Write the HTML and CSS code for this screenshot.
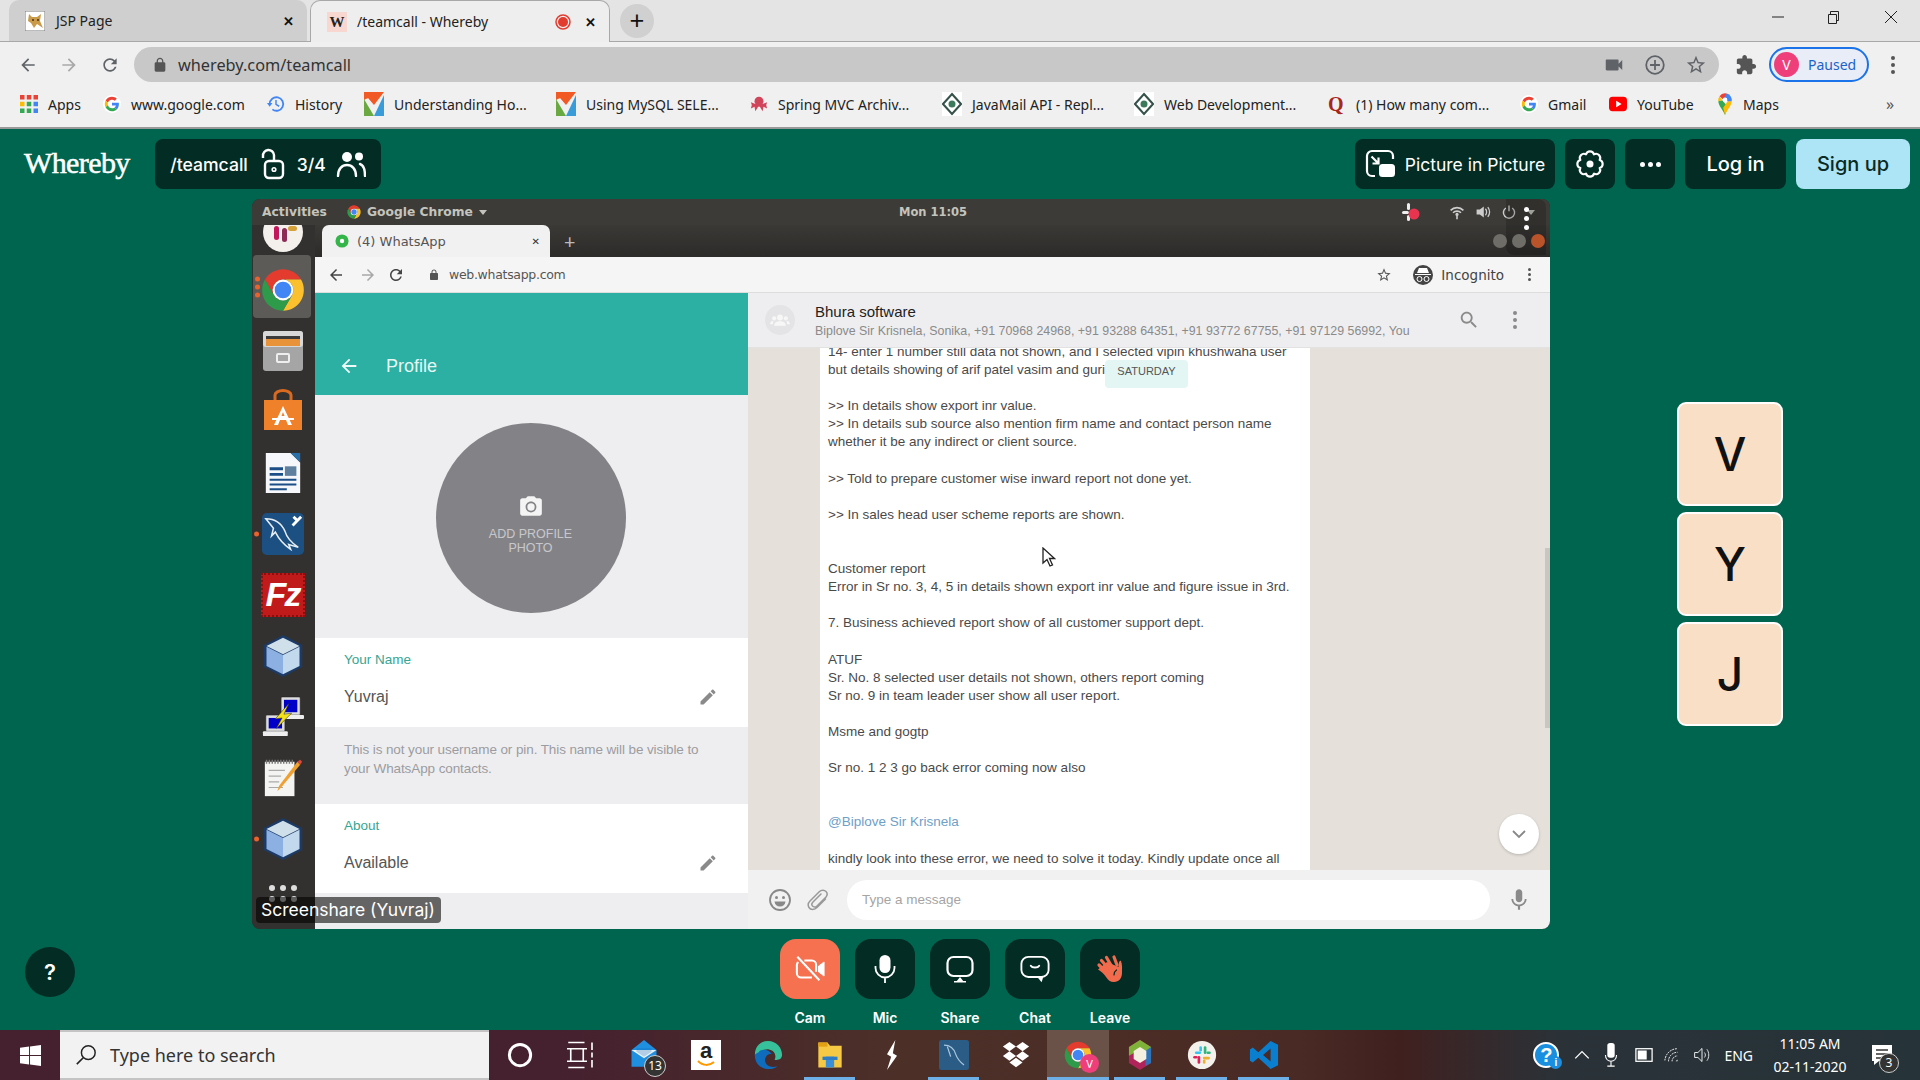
FILE: index.html
```html
<!DOCTYPE html>
<html lang="en">
<head>
  <meta charset="UTF-8" />
  <title>/teamcall - Whereby</title>
  <link rel="stylesheet" href="styles.css">
</head>
<body>
<svg class="defs" width="0" height="0">
  <symbol id="chrome" viewBox="0 0 48 48">
    <path fill="#e33b2e" d="M41.32 14A20 20 0 0 0 6.68 14L15.34 29A10 10 0 0 1 24 14Z"/>
    <path fill="#fbc02d" d="M41.32 14A20 20 0 0 1 24 44L32.66 29A10 10 0 0 0 24 14Z"/>
    <path fill="#2e9b4a" d="M24 44A20 20 0 0 1 6.68 14L15.34 29A10 10 0 0 0 32.66 29Z"/>
    <circle cx="24" cy="24" r="10" fill="#fff"/>
    <circle cx="24" cy="24" r="8" fill="#4285f4"/>
  </symbol>
  <symbol id="google" viewBox="-6 -6 60 60">
    <circle cx="24" cy="24" r="30" fill="#fff"/>
    <path fill="#ea4335" d="M24 9.5c3.54 0 6.71 1.22 9.21 3.6l6.85-6.85C35.9 2.38 30.47 0 24 0 14.62 0 6.51 5.38 2.56 13.22l7.98 6.19C12.43 13.72 17.74 9.5 24 9.5z"/>
    <path fill="#4285f4" d="M46.98 24.55c0-1.57-.15-3.09-.38-4.55H24v9.02h12.94c-.58 2.96-2.26 5.48-4.78 7.18l7.73 6c4.51-4.18 7.09-10.36 7.09-17.65z"/>
    <path fill="#fbbc05" d="M10.53 28.59c-.48-1.45-.76-2.99-.76-4.59s.27-3.14.76-4.59l-7.98-6.19C.92 16.46 0 20.12 0 24c0 3.88.92 7.54 2.56 10.78l7.97-6.19z"/>
    <path fill="#34a853" d="M24 48c6.48 0 11.93-2.13 15.89-5.81l-7.73-6c-2.15 1.45-4.92 2.3-8.16 2.3-6.26 0-11.57-4.22-13.47-9.91l-7.98 6.19C6.51 42.62 14.62 48 24 48z"/>
  </symbol>
  <symbol id="vlogo" viewBox="0 0 20 24">
    <path fill="#f15a24" d="M0 0H20L10 13 4 6 0 8Z"/>
    <path fill="#6aa842" d="M0 7 10 24H0Z"/>
    <path fill="#3a9bd9" d="M20 3V24H10Z"/>
  </symbol>
  <symbol id="diamond" viewBox="0 0 20 24">
    <rect width="20" height="24" fill="#fff"/>
    <path fill="none" stroke="#35524a" stroke-width="2" d="M10 2 19 12 10 22 1 12Z"/>
    <circle cx="10" cy="12" r="3.5" fill="#3d7a5c"/>
  </symbol>
  <symbol id="cube" viewBox="0 0 48 48">
    <path fill="#1c3a66" d="M24 1 45 12V36L24 47 3 36V12Z"/>
    <path fill="#cfe0ea" d="M24 4 42 13 24 22 6 13Z"/>
    <path fill="#8db0e2" d="M6 14 24 23V44L6 35Z"/>
    <path fill="#c2d8ec" d="M42 14 24 23V44L42 35Z"/>
  </symbol>
  <symbol id="back" viewBox="0 0 24 24"><path d="M20 11H7.83l5.59-5.59L12 4l-8 8 8 8 1.41-1.41L7.83 13H20v-2z"/></symbol>
  <symbol id="reload" viewBox="0 0 24 24"><path d="M17.65 6.35C16.2 4.9 14.21 4 12 4c-4.42 0-7.99 3.58-7.99 8s3.57 8 7.99 8c3.73 0 6.84-2.55 7.73-6h-2.08c-.82 2.33-3.04 4-5.65 4-3.31 0-6-2.69-6-6s2.69-6 6-6c1.66 0 3.14.69 4.22 1.78L13 11h7V4l-2.35 2.35z"/></symbol>
  <symbol id="lock" viewBox="0 0 24 24"><path d="M18 8h-1V6c0-2.76-2.24-5-5-5S7 3.24 7 6v2H6c-1.1 0-2 .9-2 2v10c0 1.1.9 2 2 2h12c1.1 0 2-.9 2-2V10c0-1.1-.9-2-2-2zm-2.9 0H8.9V6c0-1.71 1.39-3.1 3.1-3.1 1.71 0 3.1 1.39 3.1 3.1v2z"/></symbol>
  <symbol id="star" viewBox="0 0 24 24"><path d="M22 9.24l-7.19-.62L12 2 9.19 8.63 2 9.24l5.46 4.73L5.82 21 12 17.27 18.18 21l-1.63-7.03L22 9.24zM12 15.4l-3.76 2.27 1-4.28-3.32-2.88 4.38-.38L12 6.1l1.71 4.04 4.38.38-3.32 2.88 1 4.28L12 15.4z"/></symbol>
  <symbol id="pencil" viewBox="0 0 24 24"><path d="M3 17.25V21h3.75L17.81 9.94l-3.75-3.75L3 17.25zM20.71 7.04c.39-.39.39-1.02 0-1.41l-2.34-2.34c-.39-.39-1.02-.39-1.41 0l-1.83 1.83 3.75 3.75 1.83-1.83z"/></symbol>
  <symbol id="mic" viewBox="0 0 24 24"><path d="M12 14c1.66 0 3-1.34 3-3V5c0-1.66-1.34-3-3-3S9 3.34 9 5v6c0 1.66 1.34 3 3 3zm5.3-3c0 3-2.54 5.1-5.3 5.1S6.7 14 6.7 11H5c0 3.41 2.72 6.23 6 6.72V21h2v-3.28c3.28-.48 6-3.3 6-6.72h-1.7z"/></symbol>
</svg>

<!-- browser chrome -->
<div class="tabstrip">
  <div class="tab">
    <svg class="favicon" viewBox="0 0 20 20"><rect width="20" height="20" fill="#fff" stroke="#777"/><path fill="#c99a4a" d="M4 3 7 6H12L16 3 15 10 18 17 12 13 9 17 6 12 3 10Z"/><path fill="#6b4a20" d="M7 8h2v2H7zM12 8h2v2h-2z"/></svg>
    <span class="tab-title">JSP Page</span>
    <span class="tab-close">✕</span>
  </div>
  <div class="tab tab-active">
    <span class="w-favicon">W</span>
    <span class="tab-title">/teamcall - Whereby</span>
    <svg class="rec-dot" viewBox="0 0 16 16"><circle cx="8" cy="8" r="7" fill="none" stroke="#e33b2e" stroke-width="1.5"/><circle cx="8" cy="8" r="5" fill="#e33b2e"/></svg>
    <span class="tab-close">✕</span>
  </div>
  <div class="new-tab">+</div>
  <div class="win-controls">
    <svg viewBox="0 0 14 14"><path d="M1 7H13" stroke="#222" fill="none"/></svg>
    <svg viewBox="0 0 14 14"><path d="M2.5 4.5H10.5V13.5H2.5ZM4.5 4.5V1.5H12.5V10.5H10.5" stroke="#222" fill="none"/></svg>
    <svg class="win-close" viewBox="0 0 14 14"><path d="M1 1 13 13M13 1 1 13" stroke="#222" fill="none"/></svg>
  </div>
</div>

<div class="toolbar">
  <svg class="tool-icon"><use href="#back"/></svg>
  <svg class="tool-icon faded"><use href="#back" transform="matrix(-1 0 0 1 20 0)"/></svg>
  <svg class="tool-icon"><use href="#reload"/></svg>
  <div class="omnibox">
    <svg class="omni-lock"><use href="#lock"/></svg>
    <span class="omni-url">whereby.com/teamcall</span>
    <svg class="omni-icon" viewBox="0 0 24 24"><path d="M17 10.5V7c0-.55-.45-1-1-1H4c-.55 0-1 .45-1 1v10c0 .55.45 1 1 1h12c.55 0 1-.45 1-1v-3.5l4 4v-11l-4 4z"/></svg>
    <svg class="omni-icon" viewBox="0 0 20 20"><circle cx="10" cy="10" r="8" fill="none" stroke="#5f6368" stroke-width="1.6"/><path d="M10 5.5V14.5M5.5 10H14.5" stroke="#5f6368" stroke-width="1.6"/></svg>
    <svg class="omni-icon"><use href="#star"/></svg>
  </div>
  <svg class="puzzle" viewBox="0 0 24 24"><path d="M20.5 11H19V7c0-1.1-.9-2-2-2h-4V3.5C13 2.12 11.88 1 10.5 1S8 2.12 8 3.5V5H4c-1.1 0-1.99.9-1.99 2v3.8H3.5c1.49 0 2.7 1.21 2.7 2.7s-1.21 2.7-2.7 2.7H2V20c0 1.1.9 2 2 2h3.8v-1.5c0-1.49 1.21-2.7 2.7-2.7 1.49 0 2.7 1.21 2.7 2.7V22H17c1.1 0 2-.9 2-2v-4h1.5c1.38 0 2.5-1.12 2.5-2.5S21.88 11 20.5 11z"/></svg>
  <div class="profile-chip"><span class="avatar">V</span><span>Paused</span></div>
  <div class="kebab"><i></i><i></i><i></i></div>
</div>

<div class="bookmarks">
  <div class="bm"><svg class="bm-icon" viewBox="0 0 16 16"><g fill="#ea4335"><rect width="4" height="4"/><rect x="6" width="4" height="4"/><rect x="12" width="4" height="4"/></g><g fill="#fbbc05"><rect y="6" width="4" height="4"/></g><g fill="#34a853"><rect x="6" y="6" width="4" height="4"/><rect y="12" width="4" height="4"/><rect x="6" y="12" width="4" height="4"/></g><g fill="#4285f4"><rect x="12" y="6" width="4" height="4"/><rect x="12" y="12" width="4" height="4"/></g></svg>Apps</div>
  <div class="bm"><svg class="bm-icon"><use href="#google"/></svg>www.google.com</div>
  <div class="bm"><svg class="bm-icon" viewBox="0 0 20 20"><path d="M3 10A7.5 7.5 0 1 1 6 16" fill="none" stroke="#4285f4" stroke-width="2"/><path d="M0 9H6L3 13Z" fill="#4285f4"/><path d="M10 5.5V10.5L13.5 12.5" fill="none" stroke="#4285f4" stroke-width="1.6"/></svg>History</div>
  <div class="bm"><svg class="bm-icon bm-tall"><use href="#vlogo"/></svg>Understanding Ho...</div>
  <div class="bm"><svg class="bm-icon bm-tall"><use href="#vlogo"/></svg>Using MySQL SELE...</div>
  <div class="bm"><svg class="bm-icon" viewBox="0 0 20 20"><g fill="#d0455a"><circle cx="10" cy="7" r="5"/><path d="M6 10 1 8 2 11 1 15 5 13 6 18 9 13H11L14 18 15 13 19 15 18 11 19 8 14 10Z"/></g></svg>Spring MVC Archiv...</div>
  <div class="bm"><svg class="bm-icon bm-tall"><use href="#diamond"/></svg>JavaMail API - Repl...</div>
  <div class="bm"><svg class="bm-icon bm-tall"><use href="#diamond"/></svg>Web Development...</div>
  <div class="bm"><span class="quora">Q</span>(1) How many com...</div>
  <div class="bm"><svg class="bm-icon"><use href="#google"/></svg>Gmail</div>
  <div class="bm"><svg class="bm-icon" viewBox="0 0 20 20"><rect y="2" width="20" height="16" rx="4" fill="#f00"/><path d="M8 6.5 14 10 8 13.5Z" fill="#fff"/></svg>YouTube</div>
  <div class="bm"><svg class="bm-icon bm-pin" viewBox="0 0 16 24"><path fill="#34a853" d="M8 24C6 19 1 14 .7 9L5 8 11 15Z"/><path fill="#fbbc05" d="M8 24C10 19 15 14 15.3 9L11 9 6 16Z"/><path fill="#4285f4" d="M15.3 9A7.5 7.5 0 0 0 10 .5L6 5 11 9Z"/><path fill="#ea4335" d="M10 .5A7.5 7.5 0 0 0 2 3.5L6 7Z"/><path fill="#fbbc05" d="M2 3.5A7.5 7.5 0 0 0 .7 9L5 8Z"/><circle cx="8" cy="7.5" r="2.6" fill="#fff"/></svg>Maps</div>
  <div class="bm-more">»</div>
</div>

<!-- whereby room -->
<div class="room">
  <header class="room-top">
    <div class="logo">Whereby</div>
    <div class="pill room-pill">
      <span>/teamcall</span>
      <svg class="lock-open" viewBox="0 0 26 32"><path d="M4 10V8A5.5 5.5 0 0 1 15 7V12" fill="none" stroke="#fff" stroke-width="2.4"/><rect x="6" y="13" width="18" height="17" rx="4" fill="none" stroke="#fff" stroke-width="2.4"/><circle cx="15" cy="21.5" r="1.8" fill="none" stroke="#fff" stroke-width="1.6"/></svg>
      <span>3/4</span>
      <svg class="people" viewBox="0 0 30 26"><circle cx="11" cy="6" r="5" fill="#fff"/><circle cx="23" cy="5.5" r="4" fill="#fff"/><path d="M2 25C2 18 6 14 11 14S20 18 20 25M24 13C27 14 29 19 29 25" fill="none" stroke="#fff" stroke-width="2.4" stroke-linecap="round"/></svg>
    </div>
    <div class="pill pip-pill">
      <svg class="pip-icon" viewBox="0 0 30 30"><path d="M10 27H7A5 5 0 0 1 2 22V7A5 5 0 0 1 7 2H23A5 5 0 0 1 28 7V10" fill="none" stroke="#fff" stroke-width="2.2"/><path d="M6.500 7.500 13 14M13.500 8.500V14.500H7.500" fill="none" stroke="#fff" stroke-width="2.2"/><rect x="14" y="15" width="16" height="13" rx="3.500" fill="#fff"/></svg>
      <span>Picture in Picture</span>
    </div>
    <div class="pill icon-pill">
      <svg class="gear" viewBox="0 0 30 30"><path d="M18.750 5.950A3.900 3.900 0 0 1 24.050 11.250A3.900 3.900 0 0 1 24.050 18.750A3.900 3.900 0 0 1 18.750 24.050A3.900 3.900 0 0 1 11.250 24.050A3.900 3.900 0 0 1 5.950 18.750A3.900 3.900 0 0 1 5.950 11.250A3.900 3.900 0 0 1 11.250 5.950A3.900 3.900 0 0 1 18.750 5.950Z" fill="none" stroke="#fff" stroke-width="2" stroke-linejoin="round"/><circle cx="15" cy="15" r="3.300" fill="#fff"/></svg>
    </div>
    <div class="pill icon-pill"><span class="more-dots"><i></i><i></i><i></i></span></div>
    <div class="pill login">Log in</div>
    <div class="pill signup">Sign up</div>
  </header>

  <main class="room-mid">
    <section class="stage">
      <div class="ubuntu-bar">
        <span class="activities">Activities</span>
        <svg class="ubuntu-chrome"><use href="#chrome"/></svg>
        <span class="ubuntu-app">Google Chrome</span>
        <span class="caret"></span>
        <span class="clock">Mon 11:05</span>
        <div class="ubuntu-tray">
          <svg viewBox="0 0 20 20" class="tray-slack"><g fill="#eee"><rect x="6" y="1" width="3" height="7" rx="1.5"/><rect x="1" y="9" width="7" height="3" rx="1.5"/><rect x="6" y="13" width="3" height="6" rx="1.5"/></g><circle cx="13" cy="12" r="5.5" fill="#e8344e"/></svg>
          <svg viewBox="0 0 20 20"><path d="M2 8A11 11 0 0 1 18 8M5 11A7 7 0 0 1 15 11" fill="none" stroke="#ccc" stroke-width="2"/><circle cx="10" cy="13" r="2" fill="#ccc"/><path d="M10 14V19" stroke="#ccc" stroke-width="2"/></svg>
          <svg viewBox="0 0 20 20"><path d="M2 7H6L11 3V17L6 13H2Z" fill="#ccc"/><path d="M13 6C15 8 15 12 13 14M16 4C19 8 19 12 16 16" fill="none" stroke="#ccc" stroke-width="1.6"/></svg>
          <svg viewBox="0 0 20 20"><path d="M6 5A7 7 0 1 0 14 5M10 2V9" fill="none" stroke="#ccc" stroke-width="1.8"/></svg>
          <span class="caret"></span>
        </div>
      </div>

      <div class="desk">
        <aside class="dock">
          <div class="dock-slack"><svg viewBox="0 0 40 40"><circle cx="20" cy="20" r="20" fill="#f4f1ec"/><rect x="11" y="14" width="5" height="14" rx="2.5" fill="#c2185b"/><rect x="19" y="16" width="5" height="14" rx="2.5" fill="#8e2a55"/><rect x="25" y="14" width="9" height="5" rx="2.5" fill="#d4a13a"/></svg></div>
          <div class="dock-item dock-active"><span class="run-dots"><i></i><i></i><i></i></span><svg class="dock-chrome"><use href="#chrome"/></svg></div>
          <div class="dock-item">
            <svg viewBox="0 0 40 42"><rect y="1" width="40" height="40" rx="3" fill="#a5a5a5"/><rect y="1" width="40" height="16" rx="3" fill="#d8d8d8"/><rect x="3" y="8" width="34" height="8" fill="#e8923a"/><rect x="3" y="6" width="34" height="3" fill="#3b3b3b"/><rect x="14" y="24" width="12" height="8" rx="1" fill="none" stroke="#eee" stroke-width="2"/></svg>
          </div>
          <div class="dock-item dock-store">
            <svg viewBox="0 0 40 42"><path d="M1 11H39V41H1Z" fill="#f0812b"/><path d="M12 11V6A8 4.5 0 0 1 28 6V11" fill="none" stroke="#d96a1f" stroke-width="3"/><path d="M20 17 11 36H15L17 31H23L25 36H29ZM18.500 27 20 23 21.500 27Z" fill="#fff"/><rect x="9" y="29" width="22" height="2" fill="#fff"/></svg>
          </div>
          <div class="dock-item">
            <svg viewBox="0 0 40 44"><path d="M2 1H28L38 11V43H2Z" fill="#f5f7fa"/><path d="M28 1 38 11V1Z" fill="#2a6fa8"/><path d="M6 16H20V19H6ZM6 22H20V25H6ZM6 28H34V30H6ZM6 33H34V35H6ZM6 38H24V40H6Z" fill="#1b4e87"/><rect x="22" y="15" width="12" height="10" fill="#5f7f9f"/></svg>
          </div>
          <div class="dock-item">
            <span class="run-dots"><i></i></span>
            <svg viewBox="0 0 44 44"><rect width="44" height="44" rx="5" fill="#1c4f82"/><path d="M4 6C12 6 20 10 24 19C26 26 32 32 38 36L28 33 30 38C24 34 18 28 14 20L10 24 12 16Z" fill="none" stroke="#e6edf3" stroke-width="1.600"/><path d="M33 4 38 9M41 4 32 13" stroke="#fff" stroke-width="3"/></svg>
          </div>
          <div class="dock-item">
            <div class="fz">Fz</div>
          </div>
          <div class="dock-item"><svg class="dock-cube"><use href="#cube"/></svg></div>
          <div class="dock-item">
            <svg viewBox="0 0 44 44"><rect x="20" y="1" width="20" height="19" rx="1" fill="#ddd" stroke="#222" stroke-width=".6"/><rect x="23" y="4" width="14" height="13" fill="#0000c8"/><rect x="24" y="20" width="20" height="4" rx="1" fill="#eee"/><rect x="4" y="20" width="20" height="17" rx="1" fill="#ddd" stroke="#222" stroke-width=".6"/><rect x="7" y="23" width="14" height="11" fill="#0000c8"/><rect x="1" y="37" width="26" height="5" rx="1" fill="#eee"/><path d="M28 8 14 24 21 23 15 34 31 18 23 19Z" fill="#f4e11a" stroke="#333" stroke-width=".6"/></svg>
          </div>
          <div class="dock-item">
            <svg viewBox="0 0 44 44"><rect x="3" y="5" width="31" height="36" fill="#f4f4f2"/><path d="M4 5H33" stroke="#777" stroke-width="4" stroke-dasharray="1.500 1.500"/><path d="M7 14H24M7 20H20M7 26H18M7 32H22" stroke="#aaa" stroke-width="1.200"/><path d="M40 8 20 32 16 36 18 30 37 5Z" fill="#f0a030"/><path d="M37 5 40 8 42 5 40 3Z" fill="#e0483c"/></svg>
          </div>
          <div class="dock-item"><span class="run-dots"><i></i></span><svg class="dock-cube"><use href="#cube"/></svg></div>
          <div class="dock-grid"><i></i><i></i><i></i><i></i><i></i><i></i></div>
        </aside>

        <div class="ubuntu-win">
          <div class="inner-tabs">
            <div class="inner-tab">
              <svg viewBox="0 0 16 16"><circle cx="8" cy="8" r="7.500" fill="#33b54a"/><circle cx="8" cy="8" r="2.500" fill="#fff"/></svg>
              <span>(4) WhatsApp</span>
              <span class="inner-close">✕</span>
            </div>
            <span class="inner-new">+</span>
          </div>
          <div class="inner-toolbar">
            <svg class="inner-icon"><use href="#back"/></svg>
            <svg class="inner-icon faded"><use href="#back" transform="matrix(-1 0 0 1 20 0)"/></svg>
            <svg class="inner-icon"><use href="#reload"/></svg>
            <svg class="inner-lock"><use href="#lock"/></svg>
            <span class="inner-url">web.whatsapp.com</span>
            <svg class="inner-star"><use href="#star"/></svg>
            <span class="incog-icon"><svg viewBox="0 0 20 20"><path d="M4 8 6 3H14L16 8ZM2 9H18V10H2Z" fill="#fff"/><circle cx="6.500" cy="14" r="2.500" fill="none" stroke="#fff"/><circle cx="13.500" cy="14" r="2.500" fill="none" stroke="#fff"/></svg></span>
            <span class="incog-label">Incognito</span>
            <span class="kebab kebab-small"><i></i><i></i><i></i></span>
          </div>

          <div class="wa">
            <div class="wa-left">
              <div class="wa-head">
                <svg class="wa-back"><use href="#back"/></svg>
                <span>Profile</span>
              </div>
              <div class="wa-photo">
                <div class="photo-circle">
                  <svg viewBox="0 0 24 24"><path d="M9 2L7.170 4H4c-1.100 0-2 .9-2 2v12c0 1.100.9 2 2 2h16c1.100 0 2-.9 2-2V6c0-1.100-.9-2-2-2h-3.170L15 2H9zm3 15c-2.760 0-5-2.240-5-5s2.240-5 5-5 5 2.240 5 5-2.240 5-5 5z"/><circle cx="12" cy="12" r="3.400"/></svg>
                  <span>ADD PROFILE<br>PHOTO</span>
                </div>
              </div>
              <div class="wa-field">
                <div class="field-label">Your Name</div>
                <div class="field-value"><span>Yuvraj</span><svg><use href="#pencil"/></svg></div>
              </div>
              <div class="wa-hint">This is not your username or pin. This name will be visible to your WhatsApp contacts.</div>
              <div class="wa-field">
                <div class="field-label">About</div>
                <div class="field-value"><span>Available</span><svg><use href="#pencil"/></svg></div>
              </div>
            </div>

            <div class="wa-right">
              <div class="chat-head">
                <span class="group-avatar"><svg viewBox="0 0 24 24"><circle cx="12" cy="9" r="3.500"/><circle cx="5" cy="10" r="2.500"/><circle cx="19" cy="10" r="2.500"/><path d="M5 19C5 15 8 13.500 12 13.500S19 15 19 19ZM0 17C0 14.500 2 13 4 13L3.500 17ZM24 17C24 14.500 22 13 20 13L20.500 17Z"/></svg></span>
                <div class="chat-meta">
                  <div class="chat-name">Bhura software</div>
                  <div class="chat-members">Biplove Sir Krisnela, Sonika, +91 70968 24968, +91 93288 64351, +91 93772 67755, +91 97129 56992, You</div>
                </div>
                <svg class="chat-search" viewBox="0 0 24 24"><path d="M15.500 14h-.79l-.28-.27C15.410 12.590 16 11.110 16 9.500 16 5.910 13.090 3 9.500 3S3 5.910 3 9.500 5.910 16 9.500 16c1.610 0 3.090-.59 4.230-1.570l.27.28v.79l5 4.990L20.490 19l-4.990-5zm-6 0C7.010 14 5 11.990 5 9.500S7.010 5 9.500 5 14 7.010 14 9.500 11.990 14 9.500 14z"/></svg>
                <span class="kebab kebab-chat"><i></i><i></i><i></i></span>
              </div>
              <div class="chat-area">
                <div class="bubble">
                  14- enter 1 number still data not shown, and I selected vipin khushwaha user<br>
                  but details showing of arif patel vasim and guri<br>
                  <br>
                  &gt;&gt; In details show export inr value.<br>
                  &gt;&gt; In details sub source also mention firm name and contact person name<br>
                  whether it be any indirect or client source.<br>
                  <br>
                  &gt;&gt; Told to prepare customer wise inward report not done yet.<br>
                  <br>
                  &gt;&gt; In sales head user scheme reports are shown.<br>
                  <br>
                  <br>
                  Customer report<br>
                  Error in Sr no. 3, 4, 5 in details shown export inr value and figure issue in 3rd.<br>
                  <br>
                  7. Business achieved report show of all customer support dept.<br>
                  <br>
                  ATUF<br>
                  Sr. No. 8 selected user details not shown, others report coming<br>
                  Sr no. 9 in team leader user show all user report.<br>
                  <br>
                  Msme and gogtp<br>
                  <br>
                  Sr no. 1 2 3 go back error coming now also<br>
                  <br>
                  <br>
                  <span class="mention">@Biplove Sir Krisnela</span><br>
                  <br>
                  kindly look into these error, we need to solve it today. Kindly update once all
                </div>
                <div class="date-chip">SATURDAY</div>
                <svg class="cursor" viewBox="0 0 14 20"><path d="M1 1V16L5 12.500 8 19 10.500 18 7.500 11.500H12.500Z" fill="#fff" stroke="#222" stroke-width="1.300"/></svg>
                <div class="scroll-down"><svg viewBox="0 0 16 16"><path d="M2 5 8 11 14 5" fill="none" stroke="#888" stroke-width="1.800"/></svg></div>
                <div class="scrollbar"></div>
              </div>
              <div class="chat-foot">
                <svg class="foot-icon" viewBox="0 0 24 24"><circle cx="12" cy="12" r="10" fill="none" stroke="#888" stroke-width="1.800"/><circle cx="8.500" cy="9.500" r="1.500" fill="#888"/><circle cx="15.500" cy="9.500" r="1.500" fill="#888"/><path d="M6.500 13.500H17.500C17 17 15 18.500 12 18.500S7 17 6.500 13.500Z" fill="#888"/></svg>
                <svg class="foot-icon" viewBox="0 0 24 24"><path d="M19.500 11 11 19.500C8.500 22 4.500 22 3 19.500S2.500 14.500 4 13L13.500 3.500C15.500 1.500 18.500 2 20 3.500S21.500 7 20 9L11 18C9.500 19.500 7.500 19 6.500 18S5.500 15.500 7 14L15 6" fill="none" stroke="#999" stroke-width="1.500" stroke-linecap="round"/></svg>
                <div class="msg-input">Type a message</div>
                <svg class="foot-mic"><use href="#mic"/></svg>
              </div>
            </div>
          </div>
        </div>
      </div>

      <div class="dock-menu"><i></i><i></i><i></i></div>
      <div class="win-dots"><i></i><i></i><i class="win-dot-close"></i></div>
      <div class="share-label">Screenshare (Yuvraj)</div>
    </section>

    <div class="tiles">
      <div class="tile">V</div>
      <div class="tile">Y</div>
      <div class="tile">J</div>
    </div>
  </main>

  <footer class="room-bottom">
    <div class="help">?</div>
    <div class="controls">
      <div class="control">
        <div class="control-btn cam-btn">
          <svg viewBox="0 0 32 28"><path d="M10 5H18A4.500 4.500 0 0 1 22.500 9.500V17M18 23H6.500A4.500 4.500 0 0 1 2 18.500V9.500A4.500 4.500 0 0 1 3.500 6.500" fill="none" stroke="#fff" stroke-width="2.200"/><path d="M25 11 31 6.500V21.500L25 17Z" fill="#fff" stroke="#fff" stroke-linejoin="round"/><path d="M2.500 1 26 26" stroke="#fff" stroke-width="2.200"/></svg>
        </div>
        <span>Cam</span>
      </div>
      <div class="control">
        <div class="control-btn"><svg viewBox="0 0 24 30"><rect x="6.500" y="1" width="11" height="18" rx="5.500" fill="#fff"/><path d="M2.500 12V14A9.500 9.500 0 0 0 21.500 14V12M12 23.500V29" fill="none" stroke="#fff" stroke-width="1.800"/></svg></div>
        <span>Mic</span>
      </div>
      <div class="control">
        <div class="control-btn"><svg viewBox="0 0 30 30"><rect x="2.500" y="3" width="25" height="19" rx="6" fill="none" stroke="#fff" stroke-width="2.200"/><path d="M15 23 19 28H11Z M9 27H21V28.500H9Z" fill="#fff"/></svg></div>
        <span>Share</span>
      </div>
      <div class="control">
        <div class="control-btn"><svg viewBox="0 0 32 32"><path d="M9 3H23A7.500 7.500 0 0 1 30.500 10.500V17A7.500 7.500 0 0 1 23 24.500H9A7.500 7.500 0 0 1 1.500 17V10.500A7.500 7.500 0 0 1 9 3Z" fill="none" stroke="#fff" stroke-width="2"/><path d="M18 24H25L23 30Z" fill="#fff"/><path d="M11.500 12.500C13 15 19 15 20.500 12.500" fill="none" stroke="#fff" stroke-width="2" stroke-linecap="round"/></svg></div>
        <span>Chat</span>
      </div>
      <div class="control">
        <div class="control-btn"><svg viewBox="0 0 30 30"><path d="M4 11 11 18M6.500 6.500 13 14M11.500 3.500 16.500 12M19 3 22 11" fill="none" stroke="#f26b4d" stroke-width="3.200" stroke-linecap="round"/><path d="M3 15.500C6 17 9 20 11 23C13 26 15 28 19 28C24 28 27 24 27 19C27 15 27.500 11 26 7C24.500 6 23.500 9 23.500 13L12 8Z" fill="#f26b4d"/><path d="M19 21C19 18.500 20 17 21.500 16" fill="none" stroke="#022c24" stroke-width="1.200" stroke-linecap="round"/></svg></div>
        <span>Leave</span>
      </div>
    </div>
  </footer>
</div>

<!-- windows taskbar -->
<div class="taskbar">
  <div class="start"><svg viewBox="0 0 22 22"><path fill="#fff" d="M0 3 9.500 1.700V10.500H0ZM10.500 1.500 22 0V10.500H10.500ZM0 11.500H9.500V20.300L0 19ZM10.500 11.500H22V22L10.500 20.500Z"/></svg></div>
  <div class="search">
    <svg viewBox="0 0 24 24"><circle cx="14.500" cy="9.500" r="7.500" fill="none" stroke="#222" stroke-width="1.600"/><path d="M9 15 2 22" stroke="#222" stroke-width="1.800"/></svg>
    <span>Type here to search</span>
  </div>
  <div class="task-icons">
    <div class="task"><svg viewBox="0 0 24 24"><circle cx="12" cy="12" r="8.500" fill="none" stroke="#fff" stroke-width="2.400"/></svg></div>
    <div class="task"><svg viewBox="0 0 24 24"><path d="M1 2H14M1 22H14M3 7H13V17H3ZM0 7H3M0 17H3M13 7H16M13 17H16M20 2V8M20 10V14M20 16V22" fill="none" stroke="#fff" stroke-width="1.300"/></svg></div>
    <div class="task"><svg viewBox="0 0 30 36"><path d="M0 12 15 0 30 12V32H0Z" fill="#1f8fe0"/><path d="M0 12H30L15 22Z" fill="#e8f3fb"/><path d="M6 10H24V14L15 20 6 14Z" fill="#0a5ea8" opacity=".25"/></svg><span class="task-badge">13</span></div>
    <div class="task"><div class="amazon"><span>a</span><svg viewBox="0 0 20 8"><path d="M2 1C7 6 13 6 18 2" fill="none" stroke="#f90" stroke-width="2"/></svg></div></div>
    <div class="task"><svg viewBox="0 0 32 32"><path d="M2 16C2 6 9 1 16 1C25 1 31 8 31 16C31 20 27 22 23 21C25 18 24 11 17 10C9 9 6 16 8 21C4 22 2 19 2 16Z" fill="#37c19a"/><path d="M2 16C2 26 9 31 17 31C21 31 24 30 26 28C20 30 14 28 13 23C12 18 16 14 20 15C17 10 9 9 6 13C4 14 2 15 2 16Z" fill="#0f6cbd"/></svg></div>
    <div class="task task-open"><svg viewBox="0 0 30 36"><path d="M1 3H12L15 7H29V33H1Z" fill="#f6c945"/><path d="M1 3H12V8H1Z" fill="#e2a013"/><path d="M10 20H20V33H10Z" fill="#3b8fd8"/><path d="M6 20H24V24H6Z" fill="#2d7dc4"/></svg></div>
    <div class="task"><svg viewBox="0 0 18 36"><path d="M13 0 3 17 8 20 3 36 15 19 10 16Z" fill="#fff"/></svg></div>
    <div class="task task-open"><svg viewBox="0 0 36 36"><rect width="36" height="36" rx="3" fill="#2b5c85"/><path d="M6 6C14 6 18 10 20 17C22 23 26 27 30 30M10 8 14 20" fill="none" stroke="#a9c6dd" stroke-width="1.500"/></svg></div>
    <div class="task"><svg viewBox="0 0 32 32"><path fill="#fff" d="M9 2 16 7 9 12 2 7ZM23 2 30 7 23 12 16 7ZM9 12 16 17 9 22 2 17ZM23 12 30 17 23 22 16 17ZM16 19 23 24 16 29 9 24Z"/></svg></div>
    <div class="task task-open task-current"><svg class="task-chrome"><use href="#chrome"/></svg><span class="chrome-v">V</span></div>
    <div class="task task-open"><svg viewBox="0 0 30 38"><path d="M15 0 29 9V29L15 38 1 29V9Z" fill="#b0245a"/><path d="M15 0 29 9V20L15 12 1 20V9Z" fill="#7fb239"/><path d="M29 9V29L22 33V14Z" fill="#2f72b5"/><path d="M15 9 23 14V24L15 29 7 24V14Z" fill="#f5efe0"/></svg></div>
    <div class="task task-open"><svg viewBox="0 0 34 34"><circle cx="17" cy="17" r="16" fill="#f4f1ec"/><rect x="9" y="13" width="7" height="3" rx="1.500" fill="#36c5f0"/><rect x="14" y="7" width="3" height="6" rx="1.500" fill="#36c5f0"/><rect x="19" y="7" width="3" height="9" rx="1.500" fill="#2eb67d"/><rect x="22" y="13" width="5" height="3" rx="1.500" fill="#2eb67d"/><rect x="18" y="19" width="8" height="3" rx="1.500" fill="#ecb22e"/><rect x="18" y="22" width="3" height="5" rx="1.500" fill="#ecb22e"/><rect x="12" y="18" width="3" height="9" rx="1.500" fill="#e01e5a"/><rect x="7" y="18" width="5" height="3" rx="1.500" fill="#e01e5a"/></svg></div>
    <div class="task task-open"><svg viewBox="0 0 32 32"><path d="M23 1 31 5V27L23 31 10 19 4 24 1 22V10L4 8 10 13ZM23 9 15 16 23 23Z" fill="#0a7fd0"/></svg></div>
  </div>
  <div class="tray">
    <div class="tray-help"><span>?</span><i>i</i></div>
    <svg class="tray-icon" viewBox="0 0 16 16"><path d="M2 11 8 5 14 11" fill="none" stroke="#fff" stroke-width="1.200"/></svg>
    <svg class="tray-icon tray-mic" viewBox="0 0 16 26"><rect x="4" y="0" width="8" height="16" rx="3" fill="#fff"/><path d="M2 13C2 22 14 22 14 13M8 20V25M4 25H12" fill="none" stroke="#fff" stroke-width="1.200"/></svg>
    <svg class="tray-icon" viewBox="0 0 20 20"><rect x="1" y="3" width="18" height="14" fill="none" stroke="#fff" stroke-width="1.400"/><rect x="3" y="5" width="10" height="10" fill="#fff"/></svg>
    <svg class="tray-icon" viewBox="0 0 20 20"><path d="M1 16A14 14 0 0 1 15 3M5 17A10 10 0 0 1 15 7M9 17A6 6 0 0 1 15 11" fill="none" stroke="#fff" stroke-width="1.100" stroke-dasharray="2 1"/><path d="M13 17H15V15Z" fill="#fff"/></svg>
    <svg class="tray-icon" viewBox="0 0 22 22"><path d="M2 8H6L11 3V19L6 14H2Z" fill="none" stroke="#fff" stroke-width="1.100"/><path d="M14 8C15.500 10 15.500 12 14 14M17 4C20 8 20 14 17 18" fill="none" stroke="#fff" stroke-width="1"/></svg>
    <span class="tray-lang">ENG</span>
    <div class="tray-clock"><div>11:05 AM</div><div>02-11-2020</div></div>
    <div class="notify">
      <svg viewBox="0 0 22 22"><path d="M1 1H21V17H8L3 21V17H1Z" fill="#fff"/><path d="M5 6H17M5 10H17M5 14H14" stroke="#333" stroke-width="1.400"/></svg>
      <span>3</span>
    </div>
  </div>
</div>
</body>
</html>
```
FILE: styles.css
```css
* { box-sizing: border-box; }
html, body { margin: 0; padding: 0; }
body {
  width: 1920px;
  height: 1080px;
  overflow: hidden;
  display: flex;
  flex-direction: column;
  font-family: "Noto Sans", sans-serif;
  background: #00654f;
}
.defs { position: absolute; }
i { font-style: normal; }

/* browser tabs */
.tabstrip {
  height: 42px;
  display: flex;
  align-items: flex-end;
  background: #e4e4e4;
  border-bottom: 1px solid #a8a8a8;
  padding-left: 9px;
}
.tab {
  width: 298px;
  height: 41px;
  background: #cfcfcf;
  border-radius: 10px 10px 0 0;
  display: flex;
  align-items: center;
  padding: 0 13px 0 16px;
  font-size: 14px;
  color: #222;
}
.tab-active {
  width: 300px;
  height: 42px;
  margin-left: 3px;
  margin-bottom: -1px;
  background: #eeeeee;
  border: 1px solid #a8a8a8;
  border-bottom: none;
}
.favicon { width: 20px; height: 20px; margin-right: 11px; flex: none; }
.w-favicon {
  width: 20px;
  height: 20px;
  margin-right: 10px;
  flex: none;
  background: #f8d7d0;
  font: bold 15px/20px "Liberation Serif", serif;
  text-align: center;
  color: #222;
}
.tab-title { flex: 1; white-space: nowrap; }
.tab-close { font-size: 13px; font-weight: 700; color: #111; }
.rec-dot { width: 16px; height: 16px; margin-right: 14px; }
.new-tab {
  width: 34px;
  height: 34px;
  margin: 0 0 3px 10px;
  border-radius: 50%;
  background: #d0d0d0;
  font-size: 26px;
  line-height: 32px;
  text-align: center;
  color: #111;
}
.win-controls {
  margin-left: auto;
  align-self: flex-start;
  display: flex;
  gap: 41px;
  padding: 10px 22px 0 0;
}
.win-controls svg { width: 14px; height: 14px; }
.win-controls .win-close { margin-left: 3px; }

/* address bar */
.toolbar {
  height: 41px;
  display: flex;
  align-items: center;
  background: #f0f0f0;
  padding: 4px 0 0 18px;
}
.tool-icon { width: 20px; height: 20px; margin-right: 21px; fill: #5f6368; flex: none; }
.tool-icon:nth-child(3) { margin-right: 14px; }
.faded { fill: #a8a8a8 !important; }
.omnibox {
  width: 1585px;
  height: 35px;
  border-radius: 18px;
  background: #c8c8c8;
  display: flex;
  align-items: center;
  padding: 0 12px 0 18px;
}
.omni-lock { width: 16px; height: 16px; fill: #555; margin-right: 10px; }
.omni-url { flex: 1; font-size: 16.300px; color: #333; }
.omni-icon { width: 22px; height: 22px; margin-left: 19px; fill: #5f6368; }
.puzzle { width: 22px; height: 22px; margin-left: 16px; fill: #555; }
.profile-chip {
  width: 100px;
  height: 35px;
  margin-left: 12px;
  border: 2px solid #1a73e8;
  border-radius: 18px;
  background: #e8edf8;
  display: flex;
  align-items: center;
  gap: 9px;
  padding-left: 3px;
  font-size: 14px;
  color: #1a63c8;
}
.avatar {
  width: 25px;
  height: 25px;
  border-radius: 50%;
  background: #ee3f7a;
  color: #fff;
  font-size: 14px;
  line-height: 25px;
  text-align: center;
}
.kebab { display: flex; flex-direction: column; gap: 3px; margin-left: 22px; }
.kebab i { width: 4px; height: 4px; border-radius: 50%; background: #555; }

/* bookmarks */
.bookmarks {
  height: 46px;
  display: grid;
  grid-template-columns: 83px 164px 97px 192px 194px 192px 192px 194px 192px 89px 108px 174px auto;
  align-items: center;
  padding: 0 0 2px 20px;
  background: #f0f0f0;
  border-bottom: 2px solid #999;
  font-size: 14px;
  color: #222;
}
.bm { display: flex; align-items: center; gap: 10px; white-space: nowrap; }
.bm-icon { width: 18px; height: 18px; flex: none; }
.bm-tall { width: 20px; height: 24px; }
.bm-pin { width: 16px; height: 22px; }
.quora { font: bold 20px/20px "Liberation Serif", serif; color: #a8261a; width: 18px; }
.bm-more { font-size: 16px; color: #555; margin-left: -5px; }

/* room */
.room {
  height: 901px;
  display: flex;
  flex-direction: column;
  background: #00654f;
}
.room-top {
  height: 50px;
  margin-top: 10px;
  display: flex;
  align-items: stretch;
  gap: 10px;
  padding-right: 10px;
  font-family: "Inter", sans-serif;
}
.logo {
  width: 131px;
  margin-left: 24px;
  margin-right: -10px;
  font: 400 30px/48px "Liberation Serif", serif;
  -webkit-text-stroke: .5px #fff;
  color: #fff;
  letter-spacing: -.6px;
}
.pill {
  display: flex;
  align-items: center;
  justify-content: center;
  border-radius: 8px;
  background: #022c24;
  color: #fff;
}
.room-pill {
  width: 226px;
  font-size: 17.600px;
  gap: 12px;
  margin-right: auto;
  font-weight: 500;
}
.lock-open { width: 26px; height: 32px; margin-left: -1px; }
.people { width: 30px; height: 26px; margin-left: -2px; }
.pip-pill { width: 200px; font-size: 17.500px; gap: 10px; white-space: nowrap; }
.pip-icon { width: 30px; height: 30px; }
.icon-pill { width: 50px; }
.gear { width: 32px; height: 32px; }
.more-dots { display: flex; gap: 3px; }
.more-dots i { width: 5px; height: 5px; border-radius: 50%; background: #fff; }
.login { width: 101px; font-size: 20px; font-weight: 500; }
.signup { width: 114px; font-size: 20px; font-weight: 500; background: #aee5f6; color: #0a2a24; }

.room-mid {
  margin-top: 10px;
  height: 730px;
  display: flex;
  align-items: center;
  padding-left: 252px;
}
.stage {
  position: relative;
  width: 1298px;
  height: 730px;
  display: flex;
  flex-direction: column;
  border-radius: 8px;
  overflow: hidden;
  background: #2e2d2b;
}

/* ubuntu desktop inside the share */
.ubuntu-bar {
  height: 26px;
  flex: none;
  display: flex;
  align-items: center;
  padding-left: 10px;
  background: #3c3b37;
  font: 700 12.300px "DejaVu Sans", sans-serif;
  color: #c4c4bc;
}
.ubuntu-chrome { width: 16px; height: 16px; margin: 0 5px 0 19px; }
.caret {
  width: 0;
  height: 0;
  margin-left: 6px;
  border: 4px solid transparent;
  border-top: 5px solid #c4c4bc;
  border-bottom: none;
}
.clock { margin-left: 412px; font-size: 11.500px; }
.ubuntu-tray { margin-left: auto; display: flex; align-items: center; gap: 10px; padding-right: 15px; }
.ubuntu-tray svg { width: 16px; height: 16px; }
.ubuntu-tray .tray-slack { width: 20px; height: 20px; margin-right: 18px; }
.ubuntu-tray .caret { margin-left: 0; }

.desk { flex: 1; display: flex; min-height: 0; }
.dock {
  width: 63px;
  flex: none;
  display: flex;
  flex-direction: column;
  align-items: stretch;
  padding-right: 2px;
  background: #33312f;
  overflow: hidden;
}
.dock-slack { height: 30px; flex: none; overflow: hidden; display: flex; justify-content: center; align-items: flex-end; padding-bottom: 3px; }
.dock-slack svg { width: 40px; height: 40px; flex: none; }
.dock-item {
  position: relative;
  height: 61px;
  flex: none;
  display: flex;
  align-items: center;
  justify-content: center;
}
.dock-item svg { width: 42px; height: 42px; }
.dock-store { padding-bottom: 4px; }
.dock-active {
  height: 63px;
  margin: 0 2px 2px 1px;
  padding: 6px 0 0 2px;
  border-radius: 4px;
  background: #5d5b58;
}
.dock-item .dock-chrome { width: 50px; height: 50px; }
.dock-item .dock-cube { width: 44px; height: 44px; }
.run-dots {
  position: absolute;
  left: 2px;
  top: 50%;
  transform: translateY(-50%);
  display: flex;
  flex-direction: column;
  gap: 3px;
}
.run-dots i { width: 5px; height: 5px; border-radius: 50%; background: #e9632c; }
.fz {
  width: 44px;
  height: 44px;
  background: #c11a1a;
  border: 2px dotted #8c0f0f;
  font: italic 700 34px/38px "Liberation Sans", sans-serif;
  letter-spacing: -2px;
  color: #fff;
  text-align: center;
}
.dock-grid {
  display: grid;
  grid-template-columns: repeat(3, 6px);
  gap: 5px;
  justify-content: center;
  margin-top: 16px;
}
.dock-grid i { width: 6px; height: 6px; border-radius: 50%; background: #ddd; }

.ubuntu-win { flex: 1; min-width: 0; display: flex; flex-direction: column; }
.inner-tabs {
  height: 32px;
  flex: none;
  display: flex;
  align-items: flex-end;
  padding-left: 7px;
  background: linear-gradient(#3a3936, #2c2b29);
}
.inner-tab {
  width: 228px;
  height: 32px;
  display: flex;
  align-items: center;
  padding: 0 10px 0 13px;
  border-radius: 7px 7px 0 0;
  background: #f1f1f1;
  font: 13px "DejaVu Sans", sans-serif;
  color: #555;
}
.inner-tab svg { width: 14px; height: 14px; margin-right: 8px; }
.inner-tab span:first-of-type { flex: 1; }
.inner-close { font-size: 10px; color: #333; }
.inner-new { align-self: center; margin-left: 14px; font-size: 20px; color: #bbb; }
.inner-toolbar {
  height: 36px;
  flex: none;
  display: flex;
  align-items: center;
  padding-left: 12px;
  background: #f5f5f5;
  border-bottom: 1px solid #ddd;
}
.inner-icon { width: 18px; height: 18px; margin-right: 12px; fill: #444; flex: none; }
.inner-lock { width: 12px; height: 12px; fill: #555; margin-left: 11px; margin-right: 9px; }
.inner-url { font: 12.500px "DejaVu Sans", sans-serif; color: #555; letter-spacing: -.3px; }
.inner-star { width: 16px; height: 16px; fill: #555; margin-left: auto; }
.incog-icon { width: 20px; height: 20px; margin-left: 21px; border-radius: 50%; background: #444; }
.incog-icon svg { display: block; width: 20px; height: 20px; }
.incog-label { margin-left: 8px; font: 13.500px "DejaVu Sans", sans-serif; color: #444; }
.kebab-small { margin-left: 24px; margin-right: 19px; gap: 2px; }
.kebab-small i { width: 3px; height: 3px; }

/* whatsapp profile */
.wa { flex: 1; min-height: 0; display: flex; font-family: "Liberation Sans", sans-serif; }
.wa-left { width: 433px; flex: none; background: #eeeef0; }
.wa-head {
  height: 102px;
  display: flex;
  align-items: flex-end;
  padding: 0 0 18px 23px;
  background: #2bb0a3;
  font-size: 18px;
  color: #e6f6f3;
}
.wa-back { width: 22px; height: 22px; fill: #eefaf7; margin-right: 26px; }
.wa-photo { height: 243px; padding: 28px 2px 0 0; display: flex; justify-content: center; }
.photo-circle {
  width: 190px;
  height: 190px;
  display: flex;
  flex-direction: column;
  align-items: center;
  justify-content: center;
  padding-top: 12px;
  border-radius: 50%;
  background: #838387;
  font-size: 12.500px;
  line-height: 14px;
  text-align: center;
  color: #c8c8cc;
}
.photo-circle svg { width: 26px; height: 26px; fill: #f4f4f4; margin-bottom: 7px; }
.wa-field { height: 89px; padding: 14px 29px 0 29px; background: #fff; }
.field-label { font-size: 13.500px; line-height: 16px; color: #36a594; }
.field-value {
  display: flex;
  align-items: center;
  justify-content: space-between;
  margin-top: 18px;
  font-size: 16px;
  line-height: 22px;
  color: #555;
}
.field-value svg { width: 20px; height: 20px; fill: #8a8a8a; margin-right: 1px; }
.wa-hint {
  height: 77px;
  padding: 13px 29px 0;
  font-size: 13.500px;
  line-height: 19px;
  color: #9c9ca0;
  letter-spacing: -.1px;
}

/* whatsapp chat */
.wa-right { flex: 1; min-width: 0; display: flex; flex-direction: column; }
.chat-head {
  height: 55px;
  flex: none;
  display: flex;
  align-items: center;
  padding-left: 17px;
  background: #eeeef0;
  border-bottom: 1px solid #e2e2e2;
}
.group-avatar {
  width: 30px;
  height: 30px;
  margin-right: 20px;
  padding: 5px;
  border-radius: 50%;
  background: #e4e4e6;
}
.group-avatar svg { display: block; width: 20px; height: 20px; fill: #f7f7f7; }
.chat-name { font-size: 15px; line-height: 18px; color: #222; }
.chat-members { margin-top: 3px; font-size: 12.400px; line-height: 14px; color: #8a8a8a; white-space: nowrap; }
.chat-search { width: 22px; height: 22px; fill: #8a8a8a; margin-left: auto; }
.kebab-chat { margin: 0 33px 0 33px; gap: 3px; }
.kebab-chat i { background: #8a8a8a; }

.chat-area { position: relative; flex: 1; min-height: 0; overflow: hidden; background: #e5e0da; }
.bubble {
  width: 490px;
  height: 560px;
  margin: -5px 0 0 72px;
  padding: 0 8px;
  background: #fff;
  font-size: 13.500px;
  line-height: 18.100px;
  color: #4a4a4a;
  white-space: nowrap;
}
.mention { color: #6fa0c8; }
.date-chip {
  position: absolute;
  left: 357px;
  top: 12px;
  width: 83px;
  height: 28px;
  border-radius: 4px;
  background: #e4f6f3;
  font-size: 11px;
  line-height: 22px;
  text-align: center;
  color: #555;
}
.cursor { position: absolute; left: 294px; top: 199px; width: 14px; height: 20px; }
.scroll-down {
  position: absolute;
  right: 11px;
  bottom: 16px;
  width: 40px;
  height: 40px;
  padding: 12px;
  border-radius: 50%;
  background: #fff;
  box-shadow: 0 1px 3px rgba(0, 0, 0, .2);
}
.scroll-down svg { display: block; width: 16px; height: 16px; }
.scrollbar { position: absolute; right: 0; top: 200px; width: 5px; height: 180px; background: #c9c5c0; }
.chat-foot {
  height: 59px;
  flex: none;
  display: flex;
  align-items: center;
  padding-left: 20px;
  background: #f1f1f1;
}
.foot-icon { width: 24px; height: 24px; margin-right: 14px; flex: none; }
.msg-input {
  width: 643px;
  height: 40px;
  margin-left: 3px;
  padding-left: 15px;
  border-radius: 20px;
  background: #fff;
  font-size: 13.500px;
  line-height: 40px;
  color: #a5a5a5;
}
.foot-mic { width: 26px; height: 26px; margin-left: 16px; fill: #8a8a8a; }

/* overlays on the share */
.dock-menu {
  position: absolute;
  right: 4px;
  top: 0;
  width: 40px;
  height: 56px;
  display: flex;
  flex-direction: column;
  align-items: center;
  justify-content: center;
  gap: 4px;
  padding-bottom: 18px;
  border-radius: 0 8px 0 8px;
  background: rgba(0, 0, 0, .18);
}
.dock-menu i { width: 5px; height: 5px; border-radius: 50%; background: #fff; }
.win-dots { position: absolute; right: 5px; top: 35px; display: flex; gap: 5px; }
.win-dots i { width: 14px; height: 14px; border-radius: 50%; background: #6f6d68; }
.win-dots .win-dot-close { background: #b9532a; }
.share-label {
  position: absolute;
  left: 4px;
  bottom: 6px;
  height: 26px;
  padding: 0 6px 0 5px;
  border-radius: 4px;
  background: rgba(0, 0, 0, .58);
  font: 17.500px/25px "Inter", sans-serif;
  color: #fff;
  white-space: nowrap;
}

/* participants */
.tiles { display: flex; flex-direction: column; gap: 6px; margin-left: 127px; }
.tile {
  width: 106px;
  height: 104px;
  border: 2px solid #fff;
  border-radius: 9px;
  background: #f9dfc6;
  font: 500 46px/100px "Inter", sans-serif;
  text-align: center;
  color: #111;
}

/* bottom controls */
.room-bottom {
  flex: 1;
  display: grid;
  grid-template-columns: 1fr auto 1fr;
  padding-top: 10px;
  font-family: "Inter", sans-serif;
}
.help {
  width: 50px;
  height: 50px;
  margin: 8px 0 0 25px;
  border-radius: 50%;
  background: #022c24;
  font-size: 22px;
  font-weight: 600;
  line-height: 50px;
  text-align: center;
  color: #fff;
}
.controls { display: flex; gap: 15px; }
.control {
  width: 60px;
  display: flex;
  flex-direction: column;
  align-items: center;
  gap: 10px;
  font-size: 14px;
  font-weight: 600;
  color: #fff;
}
.control-btn {
  width: 60px;
  height: 60px;
  display: flex;
  align-items: center;
  justify-content: center;
  border-radius: 16px;
  background: #022c24;
}
.control-btn svg { width: 30px; height: 30px; }
.cam-btn { background: #f5714f; }

/* windows taskbar */
.taskbar {
  height: 50px;
  flex: none;
  display: flex;
  background: linear-gradient(90deg, #45202f 0, #45202f 560px, #4c3028 900px, #4a2a24 1300px, #40201f 1400px, #2a3238 1560px, #263338 1920px);
  color: #fff;
}
.start { width: 60px; display: flex; align-items: center; justify-content: center; }
.start svg { width: 21px; height: 21px; }
.search {
  width: 429px;
  display: flex;
  align-items: center;
  gap: 13px;
  padding-left: 15px;
  background: #f2f2f2;
  border: 2px solid #c4c4c4;
  border-left: none;
  border-right: none;
  font-size: 18px;
  color: #333;
}
.search svg { width: 22px; height: 22px; flex: none; }
.task-icons { display: flex; }
.task {
  position: relative;
  width: 62px;
  display: flex;
  align-items: center;
  justify-content: center;
}
.task svg { width: 30px; height: 30px; }
.task-open::after {
  content: "";
  position: absolute;
  left: 5px;
  right: 6px;
  bottom: 0;
  height: 3px;
  background: #6db0e8;
}
.task-current { background: #6a5248; }
.task-current::after { left: 0; right: 0; }
.task-badge {
  position: absolute;
  left: 31px;
  bottom: 3px;
  width: 22px;
  height: 22px;
  border: 1px solid #ccc;
  border-radius: 50%;
  background: #333;
  font-size: 12px;
  line-height: 20px;
  text-align: center;
}
.amazon {
  width: 30px;
  height: 30px;
  background: #fff;
  font: 700 22px/22px "Liberation Sans", sans-serif;
  color: #222;
  text-align: center;
}
.amazon span { display: block; height: 20px; }
.amazon svg { display: block; width: 22px; height: 8px; margin: 0 auto; }
.task .task-chrome { width: 32px; height: 32px; }
.chrome-v {
  position: absolute;
  left: 33px;
  bottom: 7px;
  width: 19px;
  height: 19px;
  border-radius: 50%;
  background: #ee3f7a;
  font-size: 11px;
  line-height: 19px;
  text-align: center;
}
.tray { margin-left: auto; display: flex; align-items: center; padding-right: 27px; }
.tray-help {
  position: relative;
  width: 26px;
  height: 26px;
  margin-right: 14px;
  border: 2px solid #fff;
  border-radius: 50%;
  background: #1a8fe0;
  font: 700 20px/22px "Liberation Sans", sans-serif;
  text-align: center;
}
.tray-help i {
  position: absolute;
  right: -5px;
  bottom: -3px;
  width: 13px;
  height: 13px;
  border-radius: 50%;
  background: #1a8fe0;
  font-size: 10px;
  line-height: 13px;
}
.tray-icon { width: 18px; height: 18px; margin-right: 11px; }
.tray .tray-mic { height: 24px; margin-right: 15px; }
.tray-lang { margin: 0 12px 0 2px; font-size: 14px; }
.tray-clock { width: 90px; font-size: 14px; line-height: 23px; text-align: center; }
.notify { position: relative; margin-left: 16px; }
.notify svg { display: block; width: 22px; height: 22px; }
.notify span {
  position: absolute;
  left: 8px;
  top: 9px;
  width: 20px;
  height: 20px;
  border: 1px solid #ccc;
  border-radius: 50%;
  background: #333;
  font-size: 12px;
  line-height: 18px;
  text-align: center;
}
```
